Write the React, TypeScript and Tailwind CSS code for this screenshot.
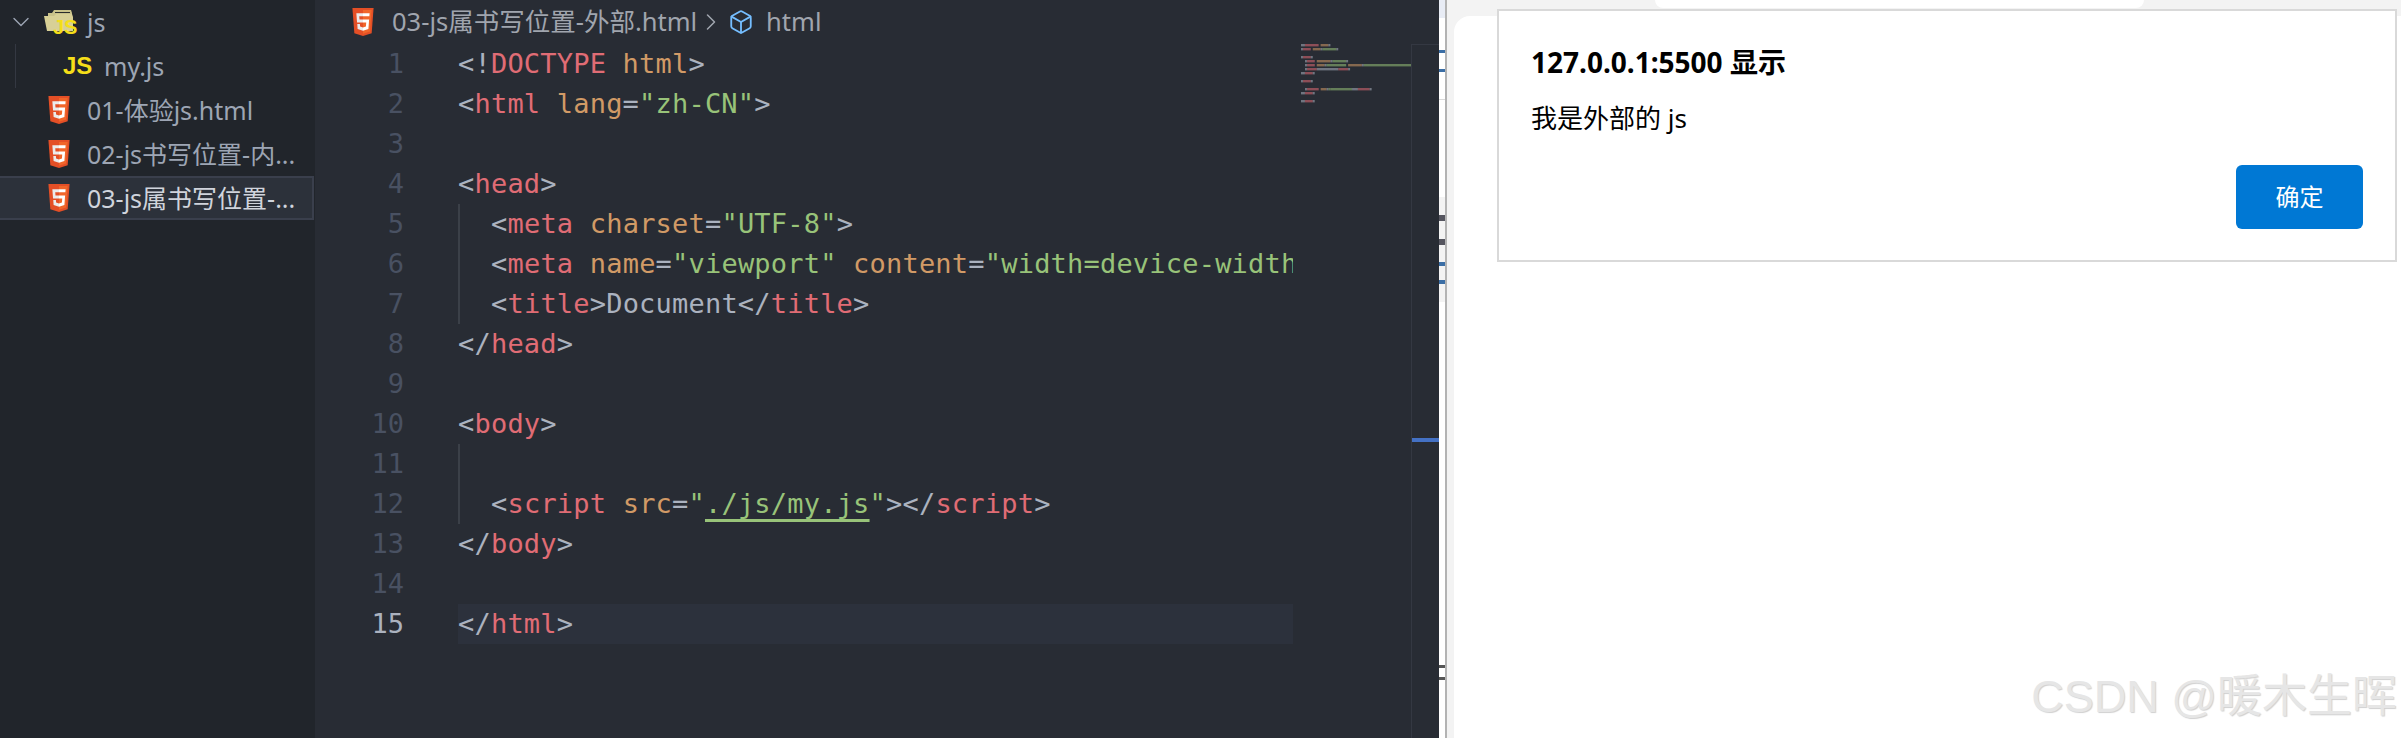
import { Box, ChevronDown, ChevronRight } from 'lucide-react'

const GRAY = '#abb2bf'
const RED = '#e06c75'
const ORANGE = '#d19a66'
const GREEN = '#98c379'

type Token = { t: string; c: string; link?: boolean }
type Line = { indent?: boolean; guide?: boolean; tokens: Token[] }

const g = (t: string): Token => ({ t, c: GRAY })
const r = (t: string): Token => ({ t, c: RED })
const o = (t: string): Token => ({ t, c: ORANGE })
const s = (t: string): Token => ({ t, c: GREEN })

const LINES: Line[] = [
  { tokens: [g('<!'), r('DOCTYPE'), g(' '), o('html'), g('>')] },
  { tokens: [g('<'), r('html'), g(' '), o('lang'), g('='), s('"zh-CN"'), g('>')] },
  { tokens: [] },
  { tokens: [g('<'), r('head'), g('>')] },
  { indent: true, tokens: [g('<'), r('meta'), g(' '), o('charset'), g('='), s('"UTF-8"'), g('>')] },
  {
    indent: true,
    tokens: [
      g('<'),
      r('meta'),
      g(' '),
      o('name'),
      g('='),
      s('"viewport"'),
      g(' '),
      o('content'),
      g('='),
      s('"width=device-width, initial-scale=1.0"'),
      g('>'),
    ],
  },
  { indent: true, tokens: [g('<'), r('title'), g('>Document</'), r('title'), g('>')] },
  { tokens: [g('</'), r('head'), g('>')] },
  { tokens: [] },
  { tokens: [g('<'), r('body'), g('>')] },
  { indent: true, tokens: [] },
  {
    indent: true,
    tokens: [
      g('<'),
      r('script'),
      g(' '),
      o('src'),
      g('='),
      s('"'),
      { t: './js/my.js', c: GREEN, link: true },
      s('"'),
      g('></'),
      r('script'),
      g('>'),
    ],
  },
  { tokens: [g('</'), r('body'), g('>')] },
  { tokens: [] },
  { tokens: [g('</'), r('html'), g('>')] },
]

function Html5Icon({ className }: { className?: string }) {
  return (
    <svg viewBox="0 0 512 512" preserveAspectRatio="none" className={className} aria-hidden>
      <path fill="#e44f26" d="M71 460 30 0h452l-41 460-185 52z" />
      <path fill="#f1662a" d="m256 472 149-41 35-394H256z" />
      <path fill="#ebebeb" d="M256 208h-75l-5-58h80V94H114l1 15 14 156h127zm0 147-62-17-4-45h-56l7 89 115 32z" />
      <path fill="#fff" d="M256 265h69l-7 73-62 17v59l115-32 1-9 13-150 2-15H256zm0-171v56h136l1-12 3-29 1-15z" />
    </svg>
  )
}

function FolderIcon() {
  return (
    <span className="relative block h-[26px] w-[32px] shrink-0">
      <svg viewBox="0 0 30 22" className="h-[22px] w-[30px]" aria-hidden>
        <path fill="#c9c28a" d="M4 4h4l2-3h17l1 3v3H4z" />
        <path fill="#2a2c2c" d="M11 3h15v1H11z" />
        <path fill="#d8d096" d="M0 7h10l2-2h16l1 3v14H3z" />
      </svg>
      <span className="absolute left-[9px] top-[8px] text-[20px] font-bold leading-[20px] text-[#f5de19] [font-family:'Liberation_Sans',sans-serif]">
        JS
      </span>
    </span>
  )
}

function FileRow({ name, selected }: { name: string; selected?: boolean }) {
  return (
    <div
      className={
        selected
          ? 'mr-px flex h-[44px] items-center border-2 border-l-0 border-[#3a3f4c] bg-[#2c313a] pl-[47px] text-[#d0d4dc]'
          : 'flex h-[44px] items-center pl-[47px]'
      }
    >
      <Html5Icon className="h-[28px] w-[24px] shrink-0" />
      <span className="ml-[16px] whitespace-nowrap">{name}</span>
    </div>
  )
}

function Sidebar() {
  return (
    <aside className="w-[315px] shrink-0 bg-[#21252b] text-[25px] leading-[44px] text-[#9da5b4]">
      <div className="flex h-[44px] items-center">
        <ChevronDown className="ml-[7px] h-[28px] w-[28px] shrink-0" strokeWidth={1.2} />
        <span className="ml-[9px]">
          <FolderIcon />
        </span>
        <span className="ml-[11px]">js</span>
      </div>
      <div className="flex h-[44px] items-center">
        <span className="ml-[15px] h-full w-px bg-[#343842]" />
        <span className="ml-[47px] w-[24px] text-[24px] font-bold text-[#f5de19] [font-family:'Liberation_Sans',sans-serif]">
          JS
        </span>
        <span className="ml-[17px]">my.js</span>
      </div>
      <FileRow name="01-体验js.html" />
      <FileRow name="02-js书写位置-内..." />
      <FileRow name="03-js属书写位置-..." selected />
    </aside>
  )
}

function Minimap() {
  return (
    <svg viewBox="0 0 118 80" className="h-[80px] w-[118px] shrink-0" aria-hidden>
      {LINES.map((line, i) => {
        let x = 8 + (line.indent ? 4 : 0)
        return line.tokens.map((tok, j) => {
          const w = tok.t.length * 1.96
          const el = tok.t.trim() ? (
            <rect key={`${i}-${j}`} x={x} y={i * 4} width={w} height={2.4} fill={tok.c} opacity={0.55} />
          ) : null
          x += w
          return el
        })
      })}
    </svg>
  )
}

function Editor() {
  return (
    <main className="flex w-[1124px] shrink-0 flex-col bg-[#282c34]">
      <div className="flex h-[43px] items-center pl-[36px] text-[25.5px] text-[#a0a5ae]">
        <Html5Icon className="h-[28px] w-[24px] shrink-0" />
        <span className="ml-[17px]">03-js属书写位置-外部.html</span>
        <ChevronRight className="h-[28px] w-[28px] shrink-0" strokeWidth={1.3} />
        <Box className="ml-[3px] h-[26px] w-[26px] shrink-0 text-[#75beff]" strokeWidth={1.7} />
        <span className="ml-[12px]">html</span>
      </div>
      <div className="flex min-h-0 flex-1 pt-px">
        <div className="w-[143px] shrink-0 pr-[54px] text-right text-[27px] leading-[40px] text-[#495162] [font-family:'DejaVu_Sans_Mono',monospace]">
          {LINES.map((_, i) => (
            <div key={i} className={i === 14 ? 'h-10 text-[#abb2bf]' : 'h-10'}>
              {i + 1}
            </div>
          ))}
        </div>
        <div className="w-[835px] shrink-0 overflow-hidden text-[27px] leading-[40px] tracking-[0.2px] [font-family:'DejaVu_Sans_Mono',monospace]">
          {LINES.map((line, i) => (
            <div
              key={i}
              className={
                i === 14 ? 'flex h-10 whitespace-pre bg-[#2c313c]' : 'flex h-10 whitespace-pre'
              }
            >
              {line.indent && <span className="h-10 w-[33px] shrink-0 border-l-2 border-[#3b4048]" />}
              <span>
                {line.tokens.map((tok, j) => (
                  <span
                    key={j}
                    style={{ color: tok.c }}
                    className={
                      tok.link
                        ? 'underline decoration-[3px] underline-offset-[6px] [text-decoration-skip-ink:none]'
                        : undefined
                    }
                  >
                    {tok.t}
                  </span>
                ))}
              </span>
            </div>
          ))}
        </div>
        <Minimap />
        <div className="w-[28px] shrink-0 border-l border-t border-[#343842] pt-[393px]">
          <div className="h-[4px] bg-[#4471c4]" />
        </div>
      </div>
    </main>
  )
}

function BrowserEdge() {
  return (
    <div className="flex w-[6px] shrink-0 flex-col bg-white">
      <div className="h-[18px] bg-[#e8ecf5]" />
      <div className="mt-[32px] h-[22px] border-y-[3px] border-[#3b6ea5]" />
      <div className="mt-[27px] h-px bg-[#d9d9d9]" />
      <div className="mt-[97px] h-[105px] bg-[#f3f3f3] pt-[18px]">
        <div className="h-[30px] border-y-[6px] border-[#55555f]" />
        <div className="mt-[17px] h-[22px] border-y-[4px] border-[#3b6ea5]" />
      </div>
      <div className="mt-[363px] h-[15px] border-y-[3px] border-[#555]" />
    </div>
  )
}

function Browser() {
  return (
    <section className="relative flex min-w-0 flex-1 flex-col border-l-2 border-[#b3b3b3] bg-[#f3f3f3] pl-[7px]">
      <div className="h-[16px] shrink-0">
        <div className="ml-[201px] h-[8px] w-[489px] rounded-b-[14px] bg-white" />
      </div>
      <div className="flex-1 rounded-tl-[16px] bg-white" />
      <div className="absolute left-[50px] top-[9px] flex h-[253px] w-[900px] flex-col border-2 border-[#d9d9d9] bg-white pl-[32px] pr-[32px] text-black [font-family:'Noto_Sans','Noto_Sans_CJK_SC',sans-serif]">
        <h1 className="mt-[33px] text-[28px] font-bold leading-[36px]">127.0.0.1:5500 显示</h1>
        <p className="mt-[20px] text-[26px] leading-[36px]">我是外部的 js</p>
        <div className="mt-[29px] flex justify-end">
          <button className="h-[64px] w-[127px] rounded-[6px] bg-[#0078d4] text-[24px] text-white">确定</button>
        </div>
      </div>
      <span className="absolute bottom-[13px] right-[4px] whitespace-nowrap text-[45px] leading-[56px] text-[#e6e6e6] [font-family:'Liberation_Sans','Noto_Sans_CJK_SC',sans-serif] [text-shadow:1px_1px_1px_#d0d0d0]">
        CSDN @暖木生晖
      </span>
    </section>
  )
}

export default function App() {
  return (
    <div className="flex h-[738px] w-[2401px] overflow-hidden bg-white [font-family:'Noto_Sans','Noto_Sans_CJK_SC',sans-serif]">
      <Sidebar />
      <Editor />
      <BrowserEdge />
      <Browser />
    </div>
  )
}
